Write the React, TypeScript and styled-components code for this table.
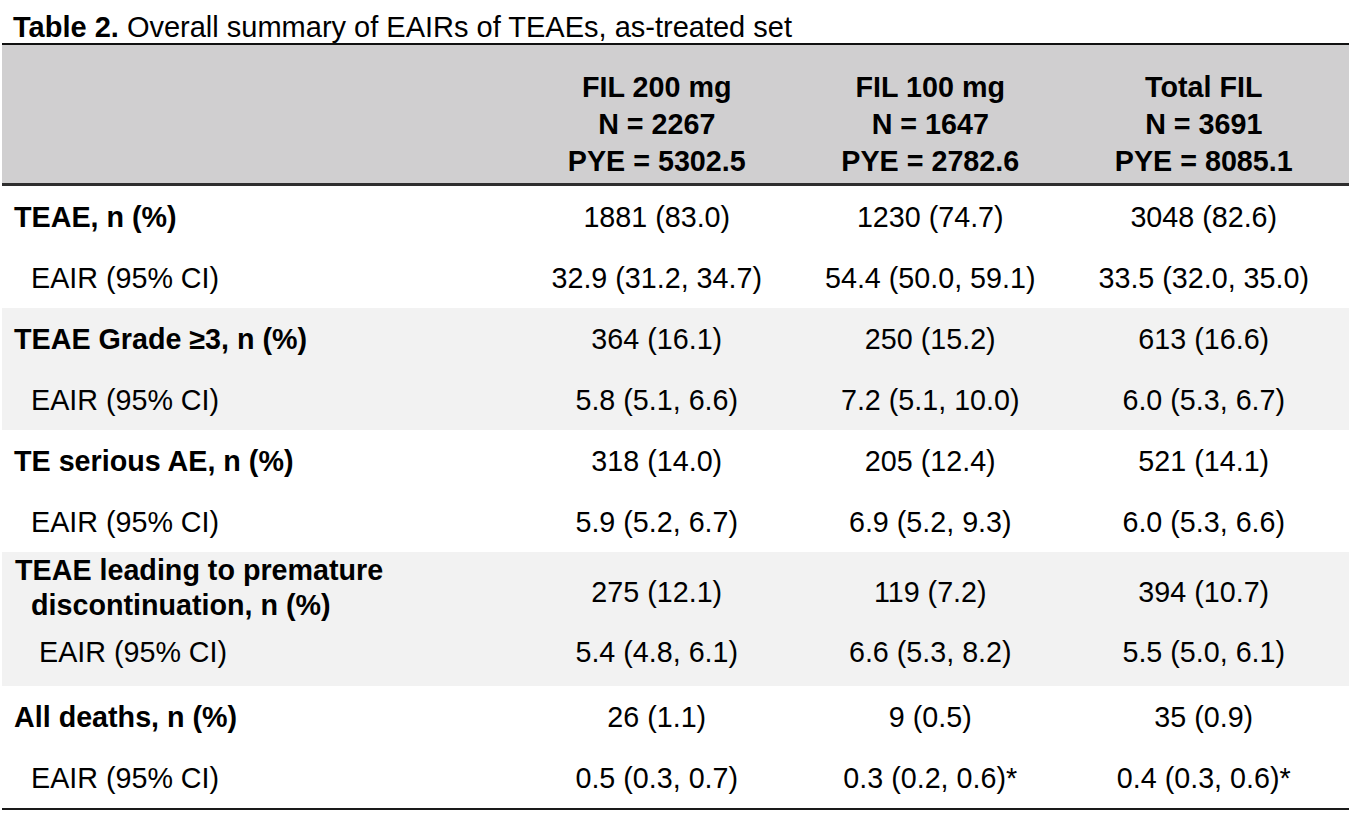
import styled, { createGlobalStyle } from 'styled-components';

const GlobalStyle = createGlobalStyle`
  html, body {
    margin: 0;
    padding: 0;
    background: #ffffff;
  }
  body {
    font-family: "Liberation Sans", Arial, sans-serif;
    color: #000;
  }
`;

const Page = styled.div`
  width: 1353px;
  padding: 11px 4px 0 2px;
  box-sizing: border-box;
`;

const Caption = styled.div`
  font-size: 29px;
  line-height: 32px;
  height: 32px;
  padding-left: 11px;
  white-space: nowrap;

  b {
    font-weight: bold;
  }
`;

const Table = styled.div`
  width: 1347px;
  border-top: 2px solid #111;
  border-bottom: 2px solid #1a1a1a;
`;

const Grid = styled.div<{ $height: number }>`
  display: grid;
  grid-template-columns: 518px repeat(3, 273.5px);
  height: ${(p) => p.$height}px;
  font-size: 28.7px;
`;

const HeaderRow = styled(Grid)`
  background: #d0cfd0;
  border-bottom: 3px solid #2e2e2e;
  align-items: end;
  padding-bottom: 3px;
  box-sizing: content-box;
`;

const HeaderCell = styled.div`
  font-weight: bold;
  text-align: center;
  line-height: 37px;
  white-space: nowrap;
`;

const Group = styled.div<{ $shaded?: boolean }>`
  background: ${(p) => (p.$shaded ? '#f2f2f2' : '#ffffff')};
`;

const Line = styled(Grid)`
  align-items: center;
`;

const Label = styled.div<{ $indent?: number; $bold?: boolean; $lineHeight?: number; $lift?: number }>`
  padding-left: ${(p) => p.$indent ?? 12}px;
  margin-top: ${(p) => -(p.$lift ?? 0)}px;
  font-weight: ${(p) => (p.$bold ? 'bold' : 'normal')};
  line-height: ${(p) => p.$lineHeight ?? 34}px;
  white-space: nowrap;
`;

const Continuation = styled.span`
  display: inline-block;
  padding-left: 16px;
`;

const Value = styled.div<{ $shift?: number }>`
  text-align: center;
  line-height: 34px;
  white-space: nowrap;
  transform: translateY(${(p) => p.$shift ?? 0}px);
`;

type Block = {
  title: string[];
  counts: string[];
  eair: string[];
  shaded?: boolean;
};

const blocks: Block[] = [
  {
    title: ['TEAE, n (%)'],
    counts: ['1881 (83.0)', '1230 (74.7)', '3048 (82.6)'],
    eair: ['32.9 (31.2, 34.7)', '54.4 (50.0, 59.1)', '33.5 (32.0, 35.0)'],
  },
  {
    title: ['TEAE Grade ≥3, n (%)'],
    counts: ['364 (16.1)', '250 (15.2)', '613 (16.6)'],
    eair: ['5.8 (5.1, 6.6)', '7.2 (5.1, 10.0)', '6.0 (5.3, 6.7)'],
    shaded: true,
  },
  {
    title: ['TE serious AE, n (%)'],
    counts: ['318 (14.0)', '205 (12.4)', '521 (14.1)'],
    eair: ['5.9 (5.2, 6.7)', '6.9 (5.2, 9.3)', '6.0 (5.3, 6.6)'],
  },
  {
    title: ['TEAE leading to premature', 'discontinuation, n (%)'],
    counts: ['275 (12.1)', '119 (7.2)', '394 (10.7)'],
    eair: ['5.4 (4.8, 6.1)', '6.6 (5.3, 8.2)', '5.5 (5.0, 6.1)'],
    shaded: true,
  },
  {
    title: ['All deaths, n (%)'],
    counts: ['26 (1.1)', '9 (0.5)', '35 (0.9)'],
    eair: ['0.5 (0.3, 0.7)', '0.3 (0.2, 0.6)*', '0.4 (0.3, 0.6)*'],
  },
];

const columns = [
  ['FIL 200 mg', 'N = 2267', 'PYE = 5302.5'],
  ['FIL 100 mg', 'N = 1647', 'PYE = 2782.6'],
  ['Total FIL', 'N = 3691', 'PYE = 8085.1'],
];

function SummaryBlock({ block }: { block: Block }) {
  const twoLine = block.title.length > 1;
  return (
    <Group $shaded={block.shaded}>
      <Line $height={twoLine ? 72 : 61}>
        <Label $bold $indent={twoLine ? 13 : 12} $lineHeight={twoLine ? 35 : 34}>
          {block.title[0]}
          {twoLine && (
            <>
              <br />
              <Continuation>{block.title[1]}</Continuation>
            </>
          )}
        </Label>
        {block.counts.map((c) => (
          <Value key={c} $shift={twoLine ? 4 : 0}>
            {c}
          </Value>
        ))}
      </Line>
      <Line $height={twoLine ? 62 : 61}>
        <Label $indent={twoLine ? 37 : 29} $lift={twoLine ? 6 : 0}>
          EAIR (95% CI)
        </Label>
        {block.eair.map((c) => (
          <Value key={c} $shift={twoLine ? -3 : 0}>
            {c}
          </Value>
        ))}
      </Line>
    </Group>
  );
}

export default function App() {
  return (
    <Page>
      <GlobalStyle />
      <Caption>
        <b>Table 2.</b> Overall summary of EAIRs of TEAEs, as-treated set
      </Caption>
      <Table>
        <HeaderRow $height={135}>
          <div />
          {columns.map((lines) => (
            <HeaderCell key={lines[0]}>
              {lines[0]}
              <br />
              {lines[1]}
              <br />
              {lines[2]}
            </HeaderCell>
          ))}
        </HeaderRow>
        {blocks.map((b) => (
          <SummaryBlock key={b.title[0]} block={b} />
        ))}
      </Table>
    </Page>
  );
}
